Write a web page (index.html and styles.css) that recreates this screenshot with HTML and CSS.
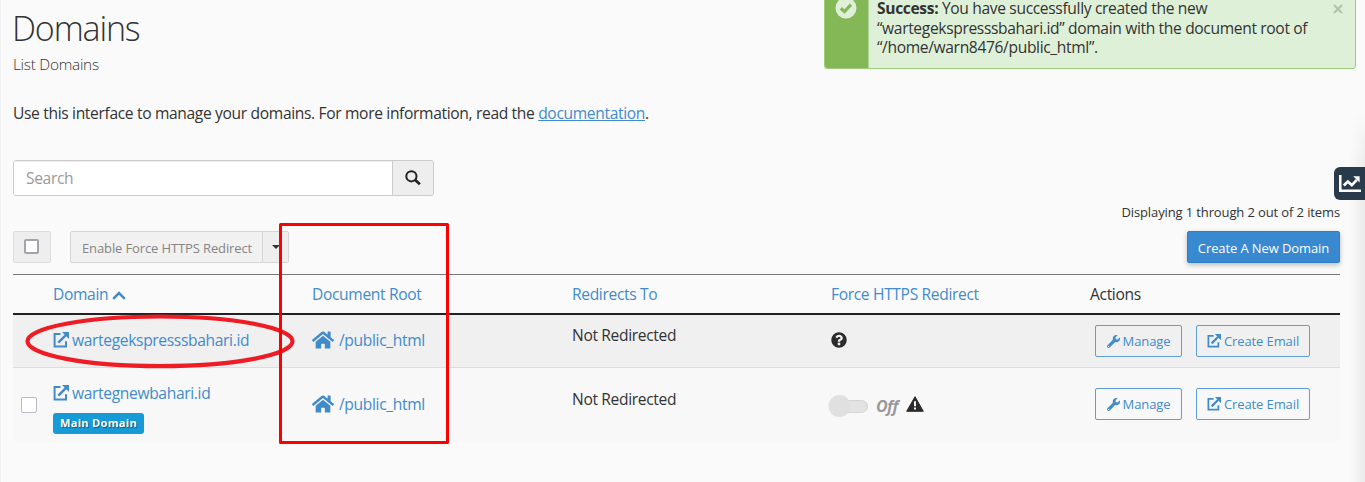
FILE: index.html
```html
<!DOCTYPE html>
<html lang="en">
<head>
<meta charset="utf-8">
<title>Domains</title>
<link rel="stylesheet" href="styles.css">
</head>
<body>
<svg class="defs" width="0" height="0" aria-hidden="true">
  <symbol id="ext" viewBox="0 0 16 16"><path d="M7.500 2.100H1.600V14.400H13V9.300" fill="none" stroke="currentColor" stroke-width="2"/><path d="M5.300 10.700 12.800 3.200" stroke="currentColor" stroke-width="2.500"/><path d="M9 0H16V7Z" fill="currentColor"/></symbol>
  <symbol id="home" viewBox="0 0 576 512"><path fill="currentColor" d="M280.400 148.300 96 300.100V464a16 16 0 0 0 16 16h112a16 16 0 0 0 16-16V368a16 16 0 0 1 16-16h64a16 16 0 0 1 16 16v96a16 16 0 0 0 16 16h112a16 16 0 0 0 16-16V300L295.700 148.300a12.200 12.200 0 0 0-15.300 0zM571.600 251.500 488 182.600V44a12 12 0 0 0-12-12h-56a12 12 0 0 0-12 12v72.600L318.500 43a48 48 0 0 0-61 0L4.300 251.500a12 12 0 0 0-1.600 16.900l25.500 31a12 12 0 0 0 16.900 1.600L280.400 107.200a12.200 12.200 0 0 1 15.300 0L531 301a12 12 0 0 0 16.900-1.600l25.500-31a12 12 0 0 0-1.800-16.900z"/></symbol>
  <symbol id="wrench" viewBox="0 0 512 512"><path fill="currentColor" d="M507.700 109.100c-2.200-9-13.500-12.100-20.100-5.500l-74.400 74.400-67.900-11.300L334 98.900l74.400-74.400c6.600-6.600 3.400-17.900-5.700-20.200-47.400-11.700-99.600.9-136.600 37.900-39.600 39.600-50.500 97.100-34.100 147.200L18.700 402.800c-25 25-25 65.500 0 90.500s65.500 25 90.500 0l213.200-213.200c50.100 16.700 107.500 5.700 147.400-34.200 37.100-37.100 49.700-89.300 37.900-136.800zM64 472a24 24 0 1 1 0-48 24 24 0 0 1 0 48z"/></symbol>
</svg>

<aside class="alert">
  <div class="alert-mark">
    <svg width="22" height="22" viewBox="0 0 22 22"><circle cx="11" cy="11" r="10.500" fill="#dff0d8"/><path d="M5.800 11.200 9.500 14.600 16 7.700" fill="none" stroke="#84b856" stroke-width="3.200"/></svg>
  </div>
  <div class="alert-text"><b>Success:</b> You have successfully created the new<br>“wartegekspresssbahari.id” domain with the document root of<br>“/home/warn8476/public_html”.</div>
  <svg class="alert-close" width="10" height="10" viewBox="0 0 10 10"><path d="M1 1 9 9M9 1 1 9" stroke="#b0c4ab" stroke-width="2.200"/></svg>
</aside>

<main class="page">
  <h1 class="title">Domains</h1>
  <h2 class="subtitle">List Domains</h2>
  <p class="intro">Use this interface to manage your domains. For more information, read the <a class="doc" href="#">documentation</a>.</p>
  <div class="search">
    <div class="search-field">Search</div>
    <div class="search-button"><svg width="16" height="16" viewBox="0 0 16 16" fill="none" stroke="#222"><circle cx="6.400" cy="6.300" r="5.100" stroke-width="2"/><path d="m10.200 10 4.700 4.200" stroke-width="2.800"/></svg></div>
  </div>
  <div class="count">Displaying 1 through 2 out of 2 items</div>
  <div class="toolbar">
    <div class="check-all"><span class="checkbox dark"></span></div>
    <div class="split"><span class="split-label">Enable Force HTTPS Redirect</span><span class="split-toggle"><i class="caret"></i></span></div>
    <div class="create">Create A New Domain</div>
  </div>
  <section class="table">
    <div class="row head">
      <span></span>
      <span class="link">Domain <svg width="14" height="9" viewBox="0 0 14 9"><path d="M1.200 7.800 7 2l5.800 5.800" fill="none" stroke="currentColor" stroke-width="2.500"/></svg></span>
      <span class="link">Document Root</span>
      <span class="link">Redirects To</span>
      <span class="link">Force HTTPS Redirect</span>
      <span>Actions</span>
    </div>
    <div class="row first">
      <span></span>
      <span class="link item"><svg width="16" height="16"><use href="#ext"/></svg>wartegekspresssbahari.id</span>
      <span class="link item home"><svg width="22" height="20"><use href="#home"/></svg>/public_html</span>
      <span class="redirect">Not Redirected</span>
      <span class="item"><svg width="16" height="16" viewBox="0 0 512 512"><path fill="#2b2b2b" d="M504 256a248 248 0 1 1-496 0 248 248 0 0 1 496 0zM262.700 90c-54.500 0-89.300 23-116.500 63.800a12 12 0 0 0 2.600 15.800l34.700 26.300a12 12 0 0 0 16.700-2.100c17.900-22.600 30.100-35.800 57.300-35.800 20.400 0 45.700 13.100 45.700 33 0 15-12.400 22.700-32.500 34-23.500 13.200-54.700 29.600-54.700 70.600v4.400a12 12 0 0 0 12 12h56a12 12 0 0 0 12-12v-1.300c0-28.500 83.200-29.600 83.200-106.700 0-58-60.200-102-116.500-102zM256 338a46 46 0 1 0 0 92 46 46 0 0 0 0-92z"/></svg></span>
      <span class="actions"><span class="action manage"><svg width="13" height="13"><use href="#wrench"/></svg>Manage</span><span class="action email"><svg width="14" height="14"><use href="#ext"/></svg>Create Email</span></span>
    </div>
    <div class="row second">
      <span class="select"><span class="checkbox"></span></span>
      <span class="stack"><span class="link item"><svg width="16" height="16"><use href="#ext"/></svg>wartegnewbahari.id</span><span class="badge">Main Domain</span></span>
      <span class="link item home"><svg width="22" height="20"><use href="#home"/></svg>/public_html</span>
      <span class="redirect">Not Redirected</span>
      <span class="toggle"><svg width="42" height="24" viewBox="0 0 42 24"><rect x="7" y="6.500" width="32.500" height="12" rx="6" fill="#e3e3e3" stroke="#d6d6d6"/><circle cx="11.500" cy="12" r="11" fill="#e0e0e0"/></svg><span class="off">Off</span><svg width="18" height="16" viewBox="0 0 18 16"><path d="M9 .7 17.300 15.300H.7Z" fill="#2b2b2b" stroke="#2b2b2b" stroke-linejoin="round"/><path d="M9 5.200v5M9 11.600v2" stroke="#f5f5f5" stroke-width="2"/></svg></span>
      <span class="actions"><span class="action manage"><svg width="13" height="13"><use href="#wrench"/></svg>Manage</span><span class="action email"><svg width="14" height="14"><use href="#ext"/></svg>Create Email</span></span>
    </div>
  </section>
</main>

<div class="stats"><svg width="22" height="18" viewBox="0 0 22 18"><path d="M1.300 0v15.700H22" fill="none" stroke="#fff" stroke-width="2.500"/><path d="m4.800 10.500 4-4 4 3.600 5-5.200" fill="none" stroke="#fff" stroke-width="2.700"/><path d="M14.200 1.200h6.400v6.400Z" fill="#fff"/></svg></div>
<div class="edge"></div>
<svg class="marks" width="1365" height="482" fill="none"><ellipse cx="160" cy="341.300" rx="132.500" ry="24.800" stroke="#ee1c24" stroke-width="4.200"/><rect x="280.500" y="224.500" width="167" height="218" stroke="#f00" stroke-width="3" stroke-linejoin="round"/></svg>
</body>
</html>
```

FILE: styles.css
```css
* { box-sizing: border-box; }
body {
  margin: 0;
  height: 482px;
  overflow: hidden;
  position: relative;
  background: #fafafa;
  border-left: 1px solid #f0f0f0;
  color: #333;
  font: 15.600px/20px "Open Sans", sans-serif;
  letter-spacing: -.35px;
}
svg { display: block; flex: none; }
.defs { position: absolute; }
.page { width: 1339px; padding: 7px 0 0 12px; }
.title { margin: 0 0 0 -1px; height: 47px; font-size: 34px; line-height: 43px; font-weight: 300; letter-spacing: -1.150px; }
.subtitle { margin: 0; height: 38px; font-size: 15.400px; line-height: 22px; font-weight: 300; letter-spacing: -.27px; }
.intro { margin: 0; height: 68px; padding-top: 11px; line-height: 20px; white-space: nowrap; letter-spacing: -.345px; }
.link, .doc { color: #428bca; }
.search { display: flex; width: 421px; height: 36px; border: 1px solid #ccc; border-radius: 3px; overflow: hidden; }
.search-field { flex: 1; padding-left: 12px; line-height: 34px; background: #fff; color: #999; border-right: 1px solid #ccc; box-shadow: inset 0 1px 1px #eee; }
.search-button { width: 40px; display: grid; place-items: center; background: #eee; }
.count { height: 35px; padding-top: 6px; text-align: right; font-size: 13px; line-height: 20px; letter-spacing: -.12px; }
.toolbar { display: flex; height: 43px; font-size: 13px; line-height: 32px; letter-spacing: -.1px; }
.check-all { display: grid; place-items: center; width: 38px; height: 32px; border: 1px solid #ddd; border-radius: 2px; background: #eee; margin-right: 20px; }
.checkbox { display: block; width: 16px; height: 16px; border: 1px solid #bbb9c2; border-radius: 2px; background: #fff; }
.checkbox.dark { width: 15px; height: 15px; margin: 0 1px 1px 0; border: 2px solid #a4a2ad; }
.split { display: flex; width: 219px; height: 32px; margin-left: -1px; border: 1px solid #d5d5d5; border-radius: 2px; background: #f1f1f1; color: #858585; }
.split-label { width: 192px; padding-left: 11px; border-right: 1px solid #d5d5d5; white-space: nowrap; letter-spacing: -.12px; }
.split-toggle { flex: 1; display: grid; place-items: center; background: #eee; }
.caret { border: 4px solid transparent; border-top-color: #333; border-bottom: 0; }
.create { width: 153px; height: 32px; margin-left: auto; text-align: center; color: #fff; background: #3889d0; border: 1px solid #337fc3; border-radius: 2px; box-shadow: 0 2px 5px rgba(0,0,0,.25); }
.row { display: grid; grid-template-columns: 40px 259px 260px 259px 259px 1fr; }
.head { height: 41px; border-top: 1px solid #777; border-bottom: 2px solid #222; line-height: 38px; }
.head svg { display: inline-block; }
.first { height: 53px; background: #f0f0f0; border-bottom: 1px solid #ddd; }
.second { height: 73px; background: #f8f8f8; }
.item { display: flex; align-items: center; height: 22px; gap: 3px; }
.home { gap: 5px; }
.first .item { margin-top: 14px; }
.redirect { margin-top: 9px; line-height: 22px; }
.select { padding: 29px 0 0 8px; }
.stack { padding-top: 14px; }
.second > .item { margin-top: 25px; }
.second .redirect { margin-top: 20px; }
.badge { display: block; width: 91px; height: 21px; margin-top: 9px; background: #179bd7; color: #fff; border-radius: 3px; text-align: center; font-size: 11px; line-height: 20px; font-weight: 700; letter-spacing: .33px; text-shadow: 1px 1px 1px #075b84; }
.toggle { display: flex; align-items: flex-start; padding-top: 26px; margin-left: -3px; }
.off { width: 26px; margin-left: 6px; font-size: 16px; line-height: 24px; font-style: italic; font-weight: 700; letter-spacing: -.6px; color: #999; }
.toggle svg:last-child { margin: 2px 0 0 4px; }
.actions { display: flex; gap: 14px; padding: 10px 0 0 5px; font-size: 13px; line-height: 33px; letter-spacing: -.1px; color: #428bca; }
.second .actions { padding-top: 20px; }
.action { display: flex; align-items: center; justify-content: center; height: 32px; border: 1px solid #5c9ed5; border-radius: 2px; gap: 3px; white-space: nowrap; }
.manage { width: 87px; }
.email { width: 114px; }
.alert { position: absolute; left: 823px; top: -12px; width: 532px; height: 81px; display: flex; border: 1px solid #9fcc7b; border-radius: 3px; background: #dff0d8; overflow: hidden; }
.alert-mark { width: 44px; padding: 8px 0 0 10px; background: #84b856; border-right: 1px solid #aed498; }
.alert-text { padding: 10px 0 0 8px; line-height: 19.500px; white-space: nowrap; }
.alert-close { margin: 15px 12px 0 auto; }
.stats { position: absolute; z-index: 2; right: 0; top: 167px; width: 31px; height: 33px; padding: 8px 0 0 5px; background: #293a4a; border-radius: 6px 0 0 6px; }
.edge { position: absolute; top: 110px; right: 0; width: 15px; height: 372px; background: linear-gradient(90deg, transparent, rgba(0,0,0,.06)); -webkit-mask-image: linear-gradient(transparent, #000 60px); mask-image: linear-gradient(transparent, #000 60px); }
.marks { position: absolute; left: -1px; top: 0; pointer-events: none; }
```
